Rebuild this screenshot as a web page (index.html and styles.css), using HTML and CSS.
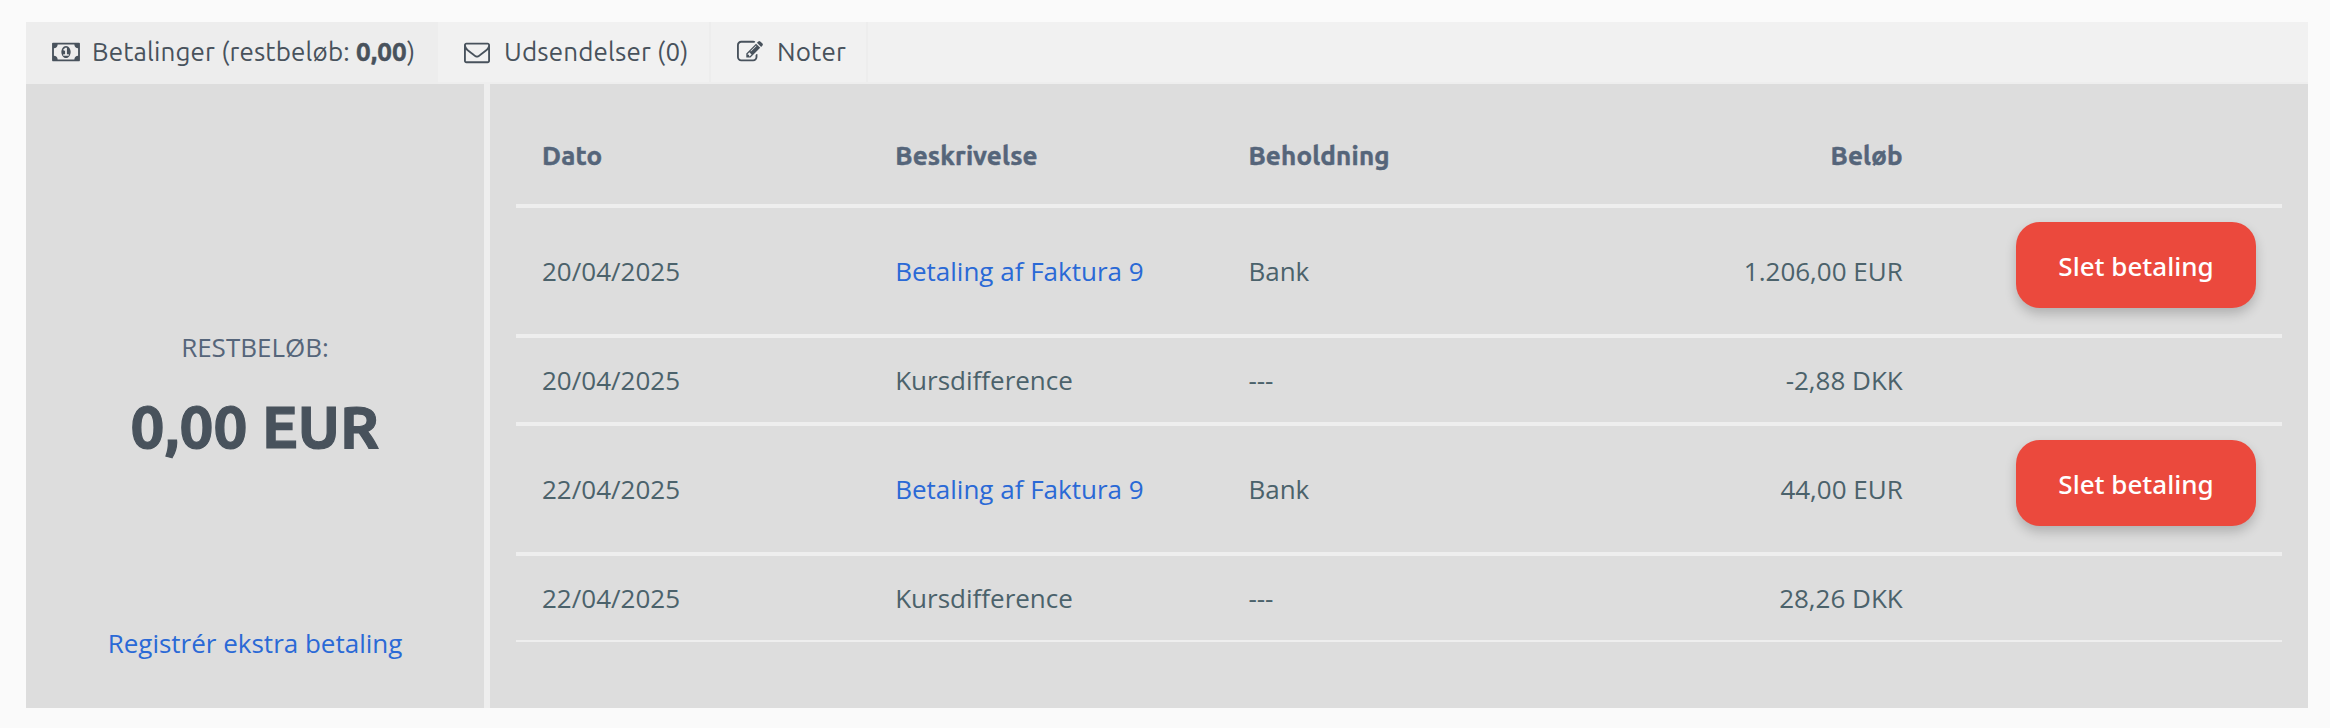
FILE: index.html
```html
<!DOCTYPE html>
<html lang="da">
<head>
<meta charset="utf-8">
<title>Betalinger</title>
<link rel="stylesheet" href="styles.css">
</head>
<body>
<main class="panel">
  <nav class="tabs">
    <a class="tab tab-payments active">
      <svg class="icon icon-money" viewBox="0 0 1920 1792"><path d="M768 1152h384v-96h-128v-448h-114l-148 137 77 80q42-37 55-57h2v288h-128v96zm512-256q0 70-21 142t-59.5 134-101.5 101-138 39-138-39-101.5-101-59.5-134-21-142 21-142 59.5-134 101.5-101 138-39 138 39 101.5 101 59.5 134 21 142zm512 256v-512q-106 0-181-75t-75-181h-1152q0 106-75 181t-181 75v512q106 0 181 75t75 181h1152q0-106 75-181t181-75zm128-832v1152q0 26-19 45t-45 19h-1792q-26 0-45-19t-19-45v-1152q0-26 19-45t45-19h1792q26 0 45 19t19 45z"/></svg>
      <span class="label">Betalinger (restbeløb: <b>0,00</b>)</span>
    </a>
    <a class="tab tab-mail">
      <svg class="icon" viewBox="0 0 1792 1792"><path d="M1664 1504v-768q-32 36-69 66-268 206-426 338-51 43-83 67t-86.500 48.500-102.500 24.500h-2q-48 0-102.500-24.500t-86.500-48.500-83-67q-158-132-426-338-37-30-69-66v768q0 13 9.500 22.500t22.500 9.500h1472q13 0 22.500-9.500t9.500-22.500zm0-1051v-24.500l-.5-13-3-12.500-5.500-9-9-7.500-14-2.500h-1472q-13 0-22.500 9.500t-9.500 22.500q0 168 147 284 193 152 401 317 6 5 35 29.500t46 37.500 44.500 31.500 50.500 27.500 43 9h2q20 0 43-9t50.500-27.500 44.500-31.500 46-37.500 35-29.500q208-165 401-317 54-43 100.500-115.500t46.500-131.500zm128-37v1088q0 66-47 113t-113 47h-1472q-66 0-113-47t-47-113v-1088q0-66 47-113t113-47h1472q66 0 113 47t47 113z"/></svg>
      <span class="label">Udsendelser (0)</span>
    </a>
    <a class="tab tab-notes">
      <svg class="icon" viewBox="0 0 1792 1792"><path d="M888 1184l116-116-152-152-116 116v56h96v96h56zm440-720q-16-16-33 1l-350 350q-17 17-1 33t33-1l350-350q17-17 1-33zm80 594v190q0 119-84.500 203.500t-203.500 84.500h-832q-119 0-203.500-84.500t-84.500-203.500v-832q0-119 84.500-203.500t203.500-84.500h832q63 0 117 25 15 7 18 23 3 17-9 29l-49 49q-14 14-32 8-23-6-45-6h-832q-66 0-113 47t-47 113v832q0 66 47 113t113 47h832q66 0 113-47t47-113v-126q0-13 9-22l64-64q15-15 35-7t20 29zm-96-738l288 288-672 672h-288v-288zm444 132l-92 92-288-288 92-92q28-28 68-28t68 28l152 152q28 28 28 68t-28 68z"/></svg>
      <span class="label">Noter</span>
    </a>
  </nav>
  <div class="content">
    <section class="summary">
      <div class="summary-label">RESTBELØB:</div>
      <div class="summary-amount">0,00 EUR</div>
      <a class="link summary-link">Registrér ekstra betaling</a>
    </section>
    <section class="payments">
      <div class="row head">
        <div class="cell">Dato</div>
        <div class="cell">Beskrivelse</div>
        <div class="cell">Beholdning</div>
        <div class="cell right">Beløb</div>
        <div class="cell"></div>
      </div>
      <div class="row tall">
        <div class="cell">20/04/2025</div>
        <div class="cell"><a class="link">Betaling af Faktura 9</a></div>
        <div class="cell">Bank</div>
        <div class="cell right">1.206,00 EUR</div>
        <div class="cell action"><button class="delete">Slet betaling</button></div>
      </div>
      <div class="row">
        <div class="cell">20/04/2025</div>
        <div class="cell">Kursdifference</div>
        <div class="cell">---</div>
        <div class="cell right">-2,88 DKK</div>
        <div class="cell"></div>
      </div>
      <div class="row tall">
        <div class="cell">22/04/2025</div>
        <div class="cell"><a class="link">Betaling af Faktura 9</a></div>
        <div class="cell">Bank</div>
        <div class="cell right">44,00 EUR</div>
        <div class="cell action"><button class="delete">Slet betaling</button></div>
      </div>
      <div class="row last">
        <div class="cell">22/04/2025</div>
        <div class="cell">Kursdifference</div>
        <div class="cell">---</div>
        <div class="cell right">28,26 DKK</div>
        <div class="cell"></div>
      </div>
    </section>
  </div>
</main>
</body>
</html>
```
FILE: styles.css
```css
* { box-sizing: border-box; }
body {
  margin: 0;
  height: 728px;
  padding: 22px 22px 20px 26px;
  background: #fafafa;
  font: 26px/40px "Open Sans", sans-serif;
  color: #4b626b;
}
.panel { height: 686px; background: #ddd; }
.tabs {
  display: flex;
  height: 62px;
  background: #f1f1f1;
  border-bottom: 2px solid #eee;
}
.tab {
  display: flex;
  align-items: center;
  height: 60px;
  padding-left: 26px;
  border-right: 2px solid #ededed;
  font-family: "Ubuntu", "Noto Sans", sans-serif;
  font-size: 26px;
  letter-spacing: .15px;
  color: #48525c;
  white-space: nowrap;
}
.tab b { -webkit-text-stroke: .5px currentColor; }
.active { background: #ededed; height: 62px; padding-bottom: 2px; border-color: #ededed; }
.tab-payments { width: 412px; }
.tab-mail { width: 273px; }
.tab-notes { width: 157px; }
.icon { width: 26px; height: 26px; fill: currentColor; flex: none; }
.icon-money { width: 28px; }
.label { margin-left: 14px; padding-bottom: 1px; }
.tab-payments .label { margin-left: 12px; }
.content { display: grid; grid-template-columns: 464px 1fr; height: 624px; }
.summary {
  border-right: 6px solid #eee;
  display: flex;
  flex-direction: column;
  align-items: center;
  padding-top: 243px;
}
.summary-label { color: #55657a; }
.summary-amount {
  margin-top: 19px;
  height: 80px;
  font: bold 60px/80px "Ubuntu", "Noto Sans", sans-serif;
  letter-spacing: .2px;
  -webkit-text-stroke: 1.2px currentColor;
  color: #48525c;
}
.summary-link { margin-top: 157px; }
.link { color: #2a69d6; }
.payments { padding: 36px 26px 0; }
.row {
  display: grid;
  grid-template-columns: repeat(5, 1fr);
  align-items: center;
  height: 88px;
  border-bottom: 4px solid #eee;
}
.head {
  padding-bottom: 13px;
  font-family: "Ubuntu", "Noto Sans", sans-serif;
  font-weight: 700;
  font-size: 26px;
  letter-spacing: .2px;
  -webkit-text-stroke: .5px currentColor;
  color: #55657a;
}
.tall { height: 130px; }
.last { height: 86px; border-bottom-width: 2px; }
.cell { padding: 0 26px; white-space: nowrap; }
.right { text-align: right; }
.action { display: flex; justify-content: flex-end; align-self: start; padding-top: 14px; }
.delete {
  width: 240px;
  height: 86px;
  padding: 2px 0 0;
  border: 0;
  border-radius: 24px;
  background: #eb493d;
  color: #fff;
  font: 500 26px/40px "Noto Sans", "Open Sans", sans-serif;
  box-shadow: 0 6px 12px rgba(0, 0, 0, .2);
}
```
